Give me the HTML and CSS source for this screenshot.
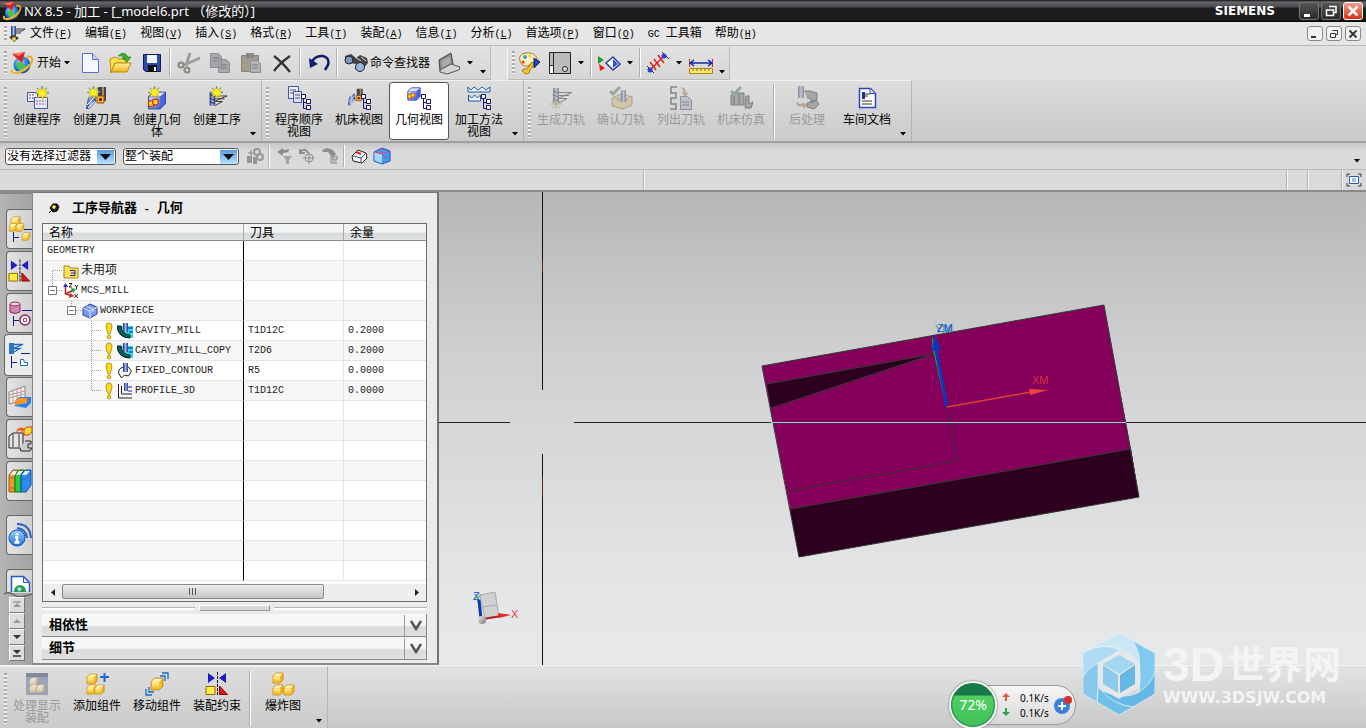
FILE: index.html
```html
<!DOCTYPE html>
<html lang="zh">
<head>
    <meta charset="UTF-8">
    <meta name="viewport" content="width=device-width, initial-scale=1.0">
    <title>NX 8.5 - 加工</title>
    <link rel="stylesheet" href="styles.css">
</head>
<body>
    <!-- shared icon parts -->
    <svg class="defs" width="0" height="0" aria-hidden="true">
        <defs>
            <linearGradient id="gBlue" x1="0" y1="0" x2="1" y2="1"><stop offset="0" stop-color="#c8d8ff"/><stop offset="1" stop-color="#3c5ee0"/></linearGradient>
            <linearGradient id="gTool" x1="0" y1="0" x2="1" y2="0"><stop offset="0" stop-color="#20306c"/><stop offset=".5" stop-color="#9db4ee"/><stop offset="1" stop-color="#26357c"/></linearGradient>
            <linearGradient id="gGold" x1="0" y1="0" x2="0" y2="1"><stop offset="0" stop-color="#fff3a0"/><stop offset="1" stop-color="#efb01c"/></linearGradient>
            <linearGradient id="gMetal" x1="0" y1="0" x2="1" y2="1"><stop offset="0" stop-color="#eee"/><stop offset="1" stop-color="#777"/></linearGradient>
            <linearGradient id="gSky" x1="0" y1="0" x2="0" y2="1"><stop offset="0" stop-color="#9fd4ff"/><stop offset="1" stop-color="#1f6fe0"/></linearGradient>
            <linearGradient id="gDrop" x1="0" y1="0" x2="0" y2="1"><stop offset="0" stop-color="#5a9ae0"/><stop offset="1" stop-color="#b8e4ff"/></linearGradient>
            <radialGradient id="gGlobe" cx=".4" cy=".35" r=".7"><stop offset="0" stop-color="#9fe0ff"/><stop offset=".6" stop-color="#1c7ad6"/><stop offset="1" stop-color="#0c3f8c"/></radialGradient>
        </defs>
        <symbol id="nx" viewBox="0 0 24 24">
            <circle cx="12" cy="14" r="8.5" fill="url(#gGlobe)"/>
            <path d="M7 12q3-2 5 0t4 3q-2 4-5 5-5-2-4-8z" fill="#4fc04a"/>
            <path d="M3 18q-3 4 3 4 9-1 14-8 4-6 1-8-2-1-4 0" fill="none" stroke="#f0a818" stroke-width="2"/>
            <path d="M3 18q-2 3 3 3 8-1 13-8" fill="none" stroke="#ffe98a" stroke-width=".8"/>
            <path d="M2 3l13-2-3 11z" fill="#e02020"/><path d="M2 3l13-2-6 4z" fill="#ff7a6a"/>
        </symbol>
        <symbol id="star" viewBox="0 0 14 14">
            <path d="M7 0l1.2 4L12 1.600 10 5.500l4 .5-3.800 2 2.300 4-4-2-1 4-1.500-4-4 2 2-4L0 7l4-1.500L2 2l3.600 2z" fill="#ffee20" stroke="#b89c10" stroke-width=".5"/>
            <path d="M7 0v3M0 7h2M12 7h2M2 2l1 1M12 2l-1 1" stroke="#2a9bb0"/>
        </symbol>
        <symbol id="tree" viewBox="0 0 10 16">
            <path d="M2.500 3v11.500H6M2.500 8.500H6" fill="none" stroke="#10107c"/>
            <path d="M.5.5h4v4h-4zM5.500 5.500h4v4h-4zM5.500 11.500h4v4h-4z" fill="#ffffc0" stroke="#10107c"/>
        </symbol>
        <symbol id="cube" viewBox="0 0 12 12">
            <path d="M1 4l3-3h7v7l-3 3H1z" fill="#f6b71c" stroke="#b87808" stroke-width=".7"/>
            <path d="M1.400 4L4 1.400h6.500L8 4z" fill="#fff4b0"/><path d="M1.400 4.400H8v6.300H1.400z" fill="url(#gGold)"/>
        </symbol>
        <symbol id="bluecube" viewBox="0 0 18 18">
            <path d="M1 5l5-4h11v11l-5 5H1z" fill="#4a64e0" stroke="#20309c" stroke-width=".8"/>
            <path d="M1.500 5L6 1.500h10.500L12 5z" fill="#d8e6ff"/><path d="M1.500 5.500H12v11H1.500z" fill="url(#gBlue)"/>
            <circle cx="3.500" cy="12" r="2.800" fill="#ffdf20" stroke="#e02010"/><circle cx="7.500" cy="10.500" r="2.800" fill="#ffdf20" stroke="#e02010"/>
        </symbol>
        <symbol id="bit" viewBox="0 0 24 24">
            <path d="M4 2h6v15H4z" fill="url(#gTool)"/><path d="M4 5l6 2M4 9l6 2M4 13l6 2" stroke="#0c1850" stroke-width=".8"/>
            <path d="M10 6.500h13L10 12M10 9.500h10M10 12.500h8L10 17" fill="none" stroke="#333"/>
        </symbol>
        <symbol id="constraint" viewBox="0 0 24 24">
            <path d="M3 1l7 5-7 5zM21 1l-7 5 7 5z" fill="#1c1cc8"/><path d="M12.500 0v24" stroke="#111" stroke-dasharray="3 1"/>
            <path d="M1 14.500h9v8H1z" fill="#ffee40" stroke="#8a6a00"/><path d="M14.500 14v8.500h8z" fill="#e01818" stroke="#800"/>
        </symbol>
        <symbol id="check" viewBox="0 0 12 10"><path d="M1 5l3 3 7-7" fill="none" stroke="#1c8c40" stroke-width="3"/></symbol>
        <symbol id="drill" viewBox="0 0 24 24">
            <path d="M13 1h8v14h-8z" fill="#444"/><path d="M17 1h2v14h-2z" fill="#b4885c"/><path d="M12 10h7v7h-7z" fill="#ffb830" stroke="#8c4a00"/><circle cx="15.500" cy="13.500" r="1.500" fill="#400"/>
            <path d="M3 12l7-5 1 8-6 8H1z" fill="url(#gTool)"/><path d="M2 19l8-8M3 22l7-7" stroke="#fff"/>
        </symbol>
        <symbol id="caret" viewBox="0 0 7 4"><path d="M0 0h6L3 3.500z" fill="#000"/></symbol>
        <symbol id="bang" viewBox="0 0 10 18">
            <path d="M2 4q0-3 3-3t3 3q0 3-2 8H4Q2 7 2 4z" fill="#ffd820" stroke="#a88400" stroke-width=".8"/><circle cx="5" cy="15" r="1.800" fill="#ffd820" stroke="#a88400" stroke-width=".8"/>
        </symbol>
        <symbol id="cavity" viewBox="0 0 16 16">
            <path d="M4 3h12v12h-4L5 10z" fill="#28d8e8"/><path d="M0 3h4q0 8 9 9v3Q1 15 0 3z" fill="#0c6058" stroke="#022"/>
            <path d="M6 0h5v9H6z" fill="url(#gTool)"/><path d="M11 5h5M12 9h4" stroke="#1020c0"/>
        </symbol>
    </svg>

    <header class="titlebar">
        <svg width="20" height="20"><use href="#nx"/></svg>
        <h1>NX 8.5 - 加工 - [_model6.prt （修改的）]</h1>
        <span class="brand">SIEMENS</span>
        <div class="window-buttons">
            <button aria-label="最小化"><svg width="12" height="12"><path d="M1 9h6v3H1z" fill="#fff"/></svg></button>
            <button aria-label="还原"><svg width="12" height="12"><path d="M4 1.500h7v6H9M1.500 5h7v5.500h-7z" fill="none" stroke="#fff" stroke-width="1.500"/></svg></button>
            <button class="close" aria-label="关闭"><svg width="12" height="12"><path d="M1.500 1.500l9 9m0-9l-9 9" stroke="#fff" stroke-width="2.500"/></svg></button>
        </div>
    </header>

    <nav class="menubar">
        <span class="grip"></span>
        <svg width="18" height="16"><path d="M3 0h5v10H3z" fill="url(#gTool)"/><path d="M8 3h9l-3 2H8M8 7h5" fill="none" stroke="#333"/><path d="M1 11l5-2 5 3-5 4z" fill="#4a3c10"/><circle cx="6" cy="13" r="2" fill="#e8d060"/></svg>
        <button>文件<span>(<u>F</u>)</span></button>
        <button>编辑<span>(<u>E</u>)</span></button>
        <button>视图<span>(<u>V</u>)</span></button>
        <button>插入<span>(<u>S</u>)</span></button>
        <button>格式<span>(<u>R</u>)</span></button>
        <button>工具<span>(<u>T</u>)</span></button>
        <button>装配<span>(<u>A</u>)</span></button>
        <button>信息<span>(<u>I</u>)</span></button>
        <button>分析<span>(<u>L</u>)</span></button>
        <button>首选项<span>(<u>P</u>)</span></button>
        <button>窗口<span>(<u>O</u>)</span></button>
        <button><span>GC </span>工具箱</button>
        <button>帮助<span>(<u>H</u>)</span></button>
        <div class="doc-buttons">
            <button aria-label="最小化文档"><svg width="10" height="10"><path d="M1 8h5" stroke="#333" stroke-width="2"/></svg></button>
            <button aria-label="还原文档"><svg width="10" height="10"><path d="M3.500 1.500h5v4H7M1.500 4.500h5v4h-5z" fill="none" stroke="#333"/></svg></button>
            <button aria-label="关闭文档"><svg width="10" height="10"><path d="M1.500 1.500l7 7m0-7l-7 7" stroke="#333" stroke-width="1.800"/></svg></button>
        </div>
    </nav>

    <div class="toolbar-row">
        <div class="toolbar">
            <span class="grip"></span>
            <button class="start"><svg width="24" height="24"><use href="#nx"/></svg>开始<svg width="7" height="4"><use href="#caret"/></svg></button>
            <button class="tool" aria-label="新建"><svg width="24" height="24"><path d="M4.500 2.500h10l6 6v13h-16z" fill="#f4f8ff" stroke="#5c6cd0"/><path d="M14.500 2.500v6h6" fill="#c4d0ff" stroke="#5c6cd0"/></svg></button>
            <button class="tool" aria-label="打开"><svg width="24" height="24"><path d="M1 8l5-2 4 2h8v4H6L2 22z" fill="#ffe24a" stroke="#b88c10"/><path d="M6 12h16l-4 9H2z" fill="url(#gGold)" stroke="#b88c10"/><path d="M9 5q6-6 10 1h3l-4 5-5-4h3q-3-3-7-2z" fill="#3cb030" stroke="#207010" stroke-width=".6"/></svg></button>
            <button class="tool" aria-label="保存"><svg width="24" height="24"><path d="M3.500 3.500h17v17h-15l-2-2z" fill="#2c4ca8" stroke="#101c60"/><path d="M7 4h10v8H7z" fill="#eef4ff"/><path d="M8 14h9v7H8z" fill="#111"/><path d="M14 16h2v4h-2z" fill="#fff"/></svg></button>
            <span class="sep"></span>
            <button class="tool" aria-label="剪切"><svg width="24" height="24" fill="none" stroke="#88887c" stroke-width="2"><path d="M13 2l-4 13M23 7L7 14" stroke="#9c9c98" stroke-width="3"/><circle cx="4" cy="14" r="2.500"/><circle cx="10" cy="19" r="2.500"/></svg></button>
            <button class="tool" aria-label="复制"><svg width="24" height="24" fill="#a8a8ac" stroke="#8c8c94"><path d="M2.500 2.500h8l3 3v11h-11zM10.500 8.500h8l3 3v10h-11z"/><path d="M5 7h6M5 10h4M13 14h6M13 17h6" stroke="#777"/></svg></button>
            <button class="tool" aria-label="粘贴"><svg width="24" height="24"><path d="M2.500 4.500h17v16h-17z" fill="#a49c88" stroke="#888478"/><path d="M7 2h8v5H7z" fill="#888"/><path d="M11.500 9.500h7l3 3v9h-10z" fill="#b4b4b8" stroke="#8c8c94"/><path d="M13 14h6M13 17h6" stroke="#777"/></svg></button>
            <button class="tool" aria-label="删除"><svg width="24" height="24"><path d="M4 5q8 6 16 16M20 5Q10 12 4 20" fill="none" stroke="#333" stroke-width="2.300"/></svg></button>
            <span class="sep"></span>
            <button class="tool" aria-label="撤消"><svg width="24" height="24"><path d="M4 12q4-8 12-7 7 2 5 9l-3 5" fill="none" stroke="#101c6c" stroke-width="2.500"/><path d="M2 7l1 10 8-4z" fill="#101c6c"/></svg></button>
            <span class="sep"></span>
            <button class="finder"><svg width="26" height="24"><path d="M2 5l6-2 5 4 4-3 7 3 1 5-8 9-5-3 1-5-6-1-5-2z" fill="#444"/><circle cx="6" cy="9" r="4" fill="#789ac8" stroke="#222"/><circle cx="17" cy="16" r="4.500" fill="#9ab4e8" stroke="#222"/><path d="M12 6l6 4M18 6l5 4" stroke="#ddd"/></svg>命令查找器</button>
            <button class="tool" aria-label="显示"><svg width="26" height="24"><path d="M3 9l12-7 2 11-13 7z" fill="#888" stroke="#444"/><path d="M5 10l9-5 1 7-9 5z" fill="#aaa"/><path d="M4 19l11-6 9 3-1 3-12 4-7-2z" fill="#d4d4d4" stroke="#555"/></svg></button>
            <button class="drop" aria-label="更多显示"><svg width="7" height="4"><use href="#caret"/></svg></button>
            <button class="overflow" aria-label="工具条选项"><svg width="7" height="4"><use href="#caret"/></svg></button>
        </div>
        <div class="toolbar second">
            <span class="grip"></span>
            <button class="tool" aria-label="颜色"><svg width="26" height="24"><path d="M3 10Q1 3 9 2t11 5q1 5-5 5l-4 3q-6 1-8-5z" fill="#fff0bc" stroke="#b07820"/><circle cx="8" cy="6" r="2" fill="#28a8e0"/><circle cx="13" cy="5" r="1.500" fill="#e8d020"/><circle cx="6" cy="11" r="1.500" fill="#e04020"/><path d="M15 11l-5 7q-4-1-5 2l4 3q4 0 4-4l4-6z" fill="#ffc830" stroke="#a87410"/><path d="M17 7l6 4-6 6z" fill="#2448c0" stroke="#101c60"/></svg></button>
            <button class="tool" aria-label="窗口布局"><svg width="24" height="24"><path d="M1.500 1.500h21v21h-21z" fill="#bcbcbc" stroke="#222"/><path d="M5.500 2v20M2 14.500h4" stroke="#222"/><path d="M2 15h3v7H2z" fill="#fff"/><circle cx="17" cy="18" r="2.500" fill="#ddd" stroke="#222"/></svg></button>
            <button class="drop" aria-label="更多布局"><svg width="7" height="4"><use href="#caret"/></svg></button>
            <span class="sep"></span>
            <button class="tool" aria-label="定向视图"><svg width="24" height="24"><path d="M1 5l6 4-6 4z" fill="#20a030"/><path d="M2 13l6 4-5 3z" fill="#e02020"/><path d="M16 6l7 7-7 6-7-7z" fill="#fff" stroke="#2840a0" stroke-width="1.500"/><path d="M16 8l5 5-5 4z" fill="#2c58d0"/></svg></button>
            <button class="drop" aria-label="更多视图"><svg width="7" height="4"><use href="#caret"/></svg></button>
            <span class="sep"></span>
            <button class="tool" aria-label="测量"><svg width="24" height="24"><path d="M4 19L18 5M4 11l6 8M8 8l6 8M12 4l6 8" stroke="#e02020" stroke-width="1.500"/><path d="M16 1l7 7M1 15l7 7" stroke="#222"/><circle cx="18" cy="5" r="2.500" fill="#2040e0"/><circle cx="4" cy="19" r="2.500" fill="#2040e0"/></svg></button>
            <button class="drop" aria-label="更多测量"><svg width="7" height="4"><use href="#caret"/></svg></button>
            <button class="tool" aria-label="标尺"><svg width="24" height="24"><path d="M.5 8v8M23.500 8v8" stroke="#e02020"/><path d="M1 12h22M5 9l-4 3 4 3M19 9l4 3-4 3" fill="none" stroke="#1030a8" stroke-width="1.500"/><path d="M.5 17.500h23v5H.5z" fill="#ffe870" stroke="#a88410"/><path d="M4 18v2M8 18v2M12 18v2M16 18v2M20 18v2" stroke="#806010"/></svg></button>
            <button class="overflow" aria-label="工具条选项"><svg width="7" height="4"><use href="#caret"/></svg></button>
        </div>
    </div>

    <div class="ribbon">
        <div class="group">
            <span class="grip"></span>
            <button class="big"><svg width="24" height="24"><path d="M2.500 6.500h10v9h-10z" fill="#eef" stroke="#4454a4"/><path d="M9.500 11.500h13v11h-13z" fill="#eef" stroke="#4454a4"/><path d="M11 15h10M11 18h10M4 9h5M4 12h5" stroke="#667" stroke-dasharray="2 1"/><use href="#star" x="10" width="14" height="14"/></svg>创建程序</button>
            <button class="big"><svg width="24" height="24"><use href="#drill"/><use href="#star" x="2" width="13" height="13"/></svg>创建刀具</button>
            <button class="big"><svg width="24" height="24"><use href="#bluecube" x="2" y="5" width="20" height="19"/><use href="#star" x="3" width="13" height="13"/></svg>创建几何体</button>
            <button class="big"><svg width="24" height="24"><use href="#bit" y="4" width="24" height="22"/><use href="#star" x="5" width="13" height="13"/></svg>创建工序</button>
            <button class="overflow" aria-label="工具条选项"><svg width="7" height="4"><use href="#caret"/></svg></button>
        </div>
        <div class="group">
            <span class="grip"></span>
            <button class="big"><svg width="24" height="24"><path d="M1.500.5h10v12h-10z" fill="#eef" stroke="#4454a4"/><path d="M6.500 5.500h8v11h-8z" fill="#dde4ff" stroke="#4454a4"/><path d="M3 4h6M3 7h3M8 9h5M8 12h5" stroke="#556"/><use href="#tree" x="14" y="8" width="10" height="16"/></svg>程序顺序视图</button>
            <button class="big"><svg width="24" height="24"><use href="#drill" width="18" height="22"/><use href="#tree" x="14" y="8" width="10" height="16"/></svg>机床视图</button>
            <button class="big active"><svg width="24" height="24"><use href="#bluecube" y="1" width="14" height="14"/><use href="#tree" x="14" y="8" width="10" height="16"/></svg>几何视图</button>
            <button class="big"><svg width="24" height="24"><path d="M1 1v5h22V1l-4 3-4-3-4 3-4-3-3 3z" fill="#e8f4ff" stroke="#205c98"/><path d="M1.500 9v6h12V9l-3 3-3-3-3 3z" fill="#e8f4ff" stroke="#205c98"/><use href="#tree" x="14" y="8" width="10" height="16"/></svg>加工方法视图</button>
            <button class="overflow" aria-label="工具条选项"><svg width="7" height="4"><use href="#caret"/></svg></button>
        </div>
        <div class="group">
            <span class="grip"></span>
            <button class="big" disabled><svg width="24" height="24"><use href="#bit"/><path d="M1 18h12M3 15l8 7M11 15l-8 7M7 14v9" stroke="#a08820"/></svg>生成刀轨</button>
            <button class="big" disabled><svg width="24" height="24"><path d="M3 12l9-4 11 3v8l-9 4-11-3z" fill="#e8b828" stroke="#966010"/><path d="M5 13l8 3 8-3-3-1H8z" fill="#50a0b0"/><path d="M12 4h5v12h-5z" fill="url(#gTool)"/><use href="#check" width="12" height="10"/></svg>确认刀轨</button>
            <button class="big" disabled><svg width="24" height="24"><path d="M8 1H2v6h5v5H2v6h5v5H1" fill="none" stroke="#333" stroke-width="1.500"/><path d="M11.500 10.500h7l4 4v9h-11z" fill="#9cadd8" stroke="#344880"/><path d="M13 16h7M13 19h7" stroke="#333"/><path d="M12 1q5 1 5 6l3-1-4 5-3-5h2" fill="#e06020"/></svg>列出刀轨</button>
            <button class="big" disabled><svg width="24" height="24"><path d="M2 9l4-2h9v12H2zM17 10h3v8l4-2-2 6h-6z" fill="#777" stroke="#222"/><path d="M5 10v8M10 8v10" stroke="#222"/><use href="#check" x="1" width="12" height="10"/></svg>机床仿真</button>
            <span class="sep"></span>
            <button class="big" disabled><svg width="24" height="24"><path d="M3 0h6v12H3z" fill="url(#gTool)"/><path d="M9 5h6l7 2v6l-5 4-2-5h-3M12 17l9-3 3 4-5 5-7-2z" fill="#777" stroke="#222"/><path d="M1 17q2 5 7 3v3l4-4-5-3v2q-3 1-4-2z" fill="#e06020"/></svg>后处理</button>
            <button class="big"><svg width="24" height="24"><path d="M4.500 2.500h11l5 5v14h-16z" fill="#fff" stroke="#2c44c8" stroke-width="1.500"/><path d="M15 2.500v5h5" fill="#dde4ff" stroke="#2c44c8"/><path d="M7 6h3v7H7z" fill="#202c90"/><path d="M10 8h5M10 10h3M7 15h10M7 18h10" stroke="#333"/></svg>车间文档</button>
            <button class="overflow" aria-label="工具条选项"><svg width="7" height="4"><use href="#caret"/></svg></button>
        </div>
    </div>

    <div class="selection-bar">
        <label class="combo filter">
            <select aria-label="类型过滤器"><option>没有选择过滤器</option></select>
            <svg width="17" height="14"><path d="M0 0h17v14H0z" fill="url(#gDrop)"/><path d="M3 4h11l-5.500 6z" fill="#111"/></svg>
        </label>
        <label class="combo scope">
            <select aria-label="选择范围"><option>整个装配</option></select>
            <svg width="17" height="14"><path d="M0 0h17v14H0z" fill="url(#gDrop)"/><path d="M3 4h11l-5.500 6z" fill="#111"/></svg>
        </label>
        <button class="small" aria-label="装配选择" disabled><svg width="18" height="18"><path d="M1 9h5v7H1zM7 10h4v7H7z" fill="#555"/><path d="M5 3v6M2 6h6" stroke="#333"/><circle cx="11" cy="5" r="3" fill="none" stroke="#665840" stroke-width="2"/><circle cx="14" cy="10" r="3" fill="none" stroke="#665840" stroke-width="2"/></svg></button>
        <span class="sep"></span>
        <button class="small" aria-label="重置过滤器" disabled><svg width="18" height="18"><path d="M14 2q1 4-6 4v3L2 5l6-4v2q4 0 6-1z" fill="#344"/><path d="M8 9h9l-3 4v4h-3v-4z" fill="#865"/></svg></button>
        <button class="small" aria-label="捕捉点" disabled><svg width="18" height="18" fill="none" stroke="#444"><path d="M2 2v4h5M2 5q5-5 8 1" stroke-width="2"/><circle cx="11" cy="11" r="4"/><path d="M11 5v12M5 11h12"/></svg></button>
        <button class="small" aria-label="查找" disabled><svg width="18" height="18"><path d="M1 3l5-2 6 2 3 4-4 3-4-5H2z" fill="#444"/><path d="M10 8v8h6M12 9h4v4h-4z" fill="#aa8" stroke="#444"/></svg></button>
        <span class="sep"></span>
        <button class="small" aria-label="小平面"><svg width="18" height="18"><path d="M2 9l6-6 8 3 1 5-5 5-9-2z" fill="#f4f4f4" stroke="#222"/><path d="M3 9l8 2 5-5M11 11v5" fill="none" stroke="#3454a8"/><path d="M6 5l5 2" stroke="#e02020" stroke-width="2"/></svg></button>
        <button class="small" aria-label="着色"><svg width="18" height="18"><path d="M1 5l8-4 8 3v10l-8 3-8-3z" fill="#3c9cf8" stroke="#2848c0"/><path d="M1.500 5L9 7v9.500l-7.500-3z" fill="#a4d8ff"/><path d="M1.500 5L9 7l7.500-3M9 1v6l5 5" fill="none" stroke="#e84060"/></svg></button>
        <button class="overflow" aria-label="工具条选项"><svg width="7" height="4"><use href="#caret"/></svg></button>
    </div>

    <div class="status-bar">
        <span class="cue"></span>
        <span class="status"></span>
        <span class="cell"></span>
        <span class="cell wide"></span>
        <button aria-label="全屏"><svg width="16" height="14"><path d="M3.500 3.500h9v7h-9z" fill="#fff" stroke="#2858b8"/><path d="M1 4V1h3M12 1h3v3M15 10v3h-3M4 13H1v-3" fill="none" stroke="#333"/><path d="M6 6h4M6 8h4" stroke="#4878c8"/></svg></button>
    </div>

    <main class="workspace">
        <aside class="resource-bar">
            <button class="tab" aria-label="装配导航器"><svg width="24" height="26"><use href="#cube" x="2" width="11" height="11"/><use href="#cube" y="7" width="10" height="9"/><use href="#cube" x="7" y="7" width="10" height="9"/><use href="#cube" x="13" y="16" width="10" height="9"/><path d="M5.500 16v10M6 21.500h5M16 13.500h8" stroke="#101c80"/></svg></button>
            <button class="tab" aria-label="约束导航器"><svg width="24" height="26"><use href="#constraint" width="23" height="26"/></svg></button>
            <button class="tab" aria-label="部件导航器"><svg width="24" height="26"><path d="M2 4v8q5 3 10 0V4z" fill="#d088b0" stroke="#8c2860"/><ellipse cx="7" cy="4" rx="5" ry="2" fill="#ffd0e8" stroke="#8c2860"/><path d="M5.500 16v10M6 20.500h5M14 10.500h10" stroke="#101c80"/><circle cx="17" cy="20" r="5" fill="#fff" stroke="#8c2860" stroke-width="1.500"/><circle cx="17" cy="20" r="1.800" fill="none" stroke="#8c2860"/></svg></button>
            <button class="tab current" aria-label="工序导航器"><svg width="24" height="26"><path d="M3 1h5v11H3z" fill="#2c78c8"/><path d="M8 2.500h9L8 6M8 6.500h6L8 10" fill="none" stroke="#2068c0" stroke-width="1.300"/><path d="M5.500 14v12M6 20.500h5M15 11.500h9" stroke="#101c80"/><path d="M14.500 17.500h3l1 3h3v3h-7z" fill="#fff" stroke="#2068c0"/></svg></button>
            <button class="tab" aria-label="机床导航器"><svg width="24" height="26"><path d="M1 8l16-6v14L1 20z" fill="#eee" stroke="#888"/><path d="M1 11l16-4M1 14l16-4M5 7v12M9 5v13M13 4v13" stroke="#c89898"/><path d="M7 17l4-4h12v6l-5 5-11-2z" fill="#2880f0"/><path d="M7 17l4-3h8v5l-12 2z" fill="#ff9420"/></svg></button>
            <button class="tab" aria-label="加工特征"><svg width="24" height="26"><path d="M1 10l4-3h10v15H1z" fill="#e4e4e4" stroke="#222"/><path d="M5 8v13M11 8v13" stroke="#333"/><path d="M17 15h6v3h-3v4h4l-2 3h-9l-1-3" fill="#ccc" stroke="#222"/><path d="M8 7q1-6 6-5l-1-1 4 2-4 3v-2q-3 0-5 3z" fill="#f05810"/><path d="M16 3l3-2h5v5l-3 3h-5z" fill="#ffdc30" stroke="#e03010"/></svg></button>
            <button class="tab" aria-label="重用库"><svg width="24" height="26"><path d="M1 7l4-5h5L7 7v17H1z" fill="#f09828" stroke="#a05008"/><path d="M7 7l4-5h5l-3 5v17H7z" fill="#28d040" stroke="#0c7c18"/><path d="M13 7l4-5h6v15l-5 7h-5z" fill="#2c8cf0" stroke="#104ca0"/><path d="M2 7l3-4h4L7 7zM8 7l3-4h4l-3 4zM14 7l3-4h5l-4 4z" fill="#f4f4f4"/><path d="M2 10h4M2 20h4M14 11h4l5-5M14 20h4" fill="none" stroke="#104ca0" stroke-opacity=".5"/></svg></button>
            <button class="tab gap" aria-label="HD3D 工具"><svg width="24" height="26"><circle cx="9" cy="16" r="8" fill="url(#gSky)" stroke="#1450b0"/><path d="M9 11v2M7 15h2v5M6.500 20.500h5" stroke="#fff" stroke-width="2.500" fill="none"/><path d="M9 2q13 0 14 14M9 6q9 1 10 10" fill="none" stroke="#2c60c0" stroke-width="2"/></svg></button>
            <button class="tab gap cut" aria-label="浏览器"><svg width="24" height="20"><path d="M3.500 4.500h12l6 6v10h-18z" fill="#fff" stroke="#2458d8" stroke-width="1.500"/><path d="M15.500 4.500v6h6" fill="none" stroke="#2458d8"/><circle cx="12" cy="19" r="6" fill="#2a9c48"/><path d="M9 16q3-2 5 1l-3 3z" fill="#a4dcff"/></svg></button>
            <svg class="wave" width="28" height="5"><path d="M0 2q5-3 10 1t18-1" fill="none" stroke="#666" stroke-width="1.500"/></svg>
            <div class="tab-scroll">
                <button aria-label="最前" disabled><svg width="10" height="8"><path d="M1 1h8" stroke="#999" stroke-width="1.500"/><path d="M5 2l4 4H1z" fill="#999"/></svg></button>
                <button aria-label="向上" disabled><svg width="10" height="8"><path d="M5 2l4 4H1z" fill="#999"/></svg></button>
                <button aria-label="向下"><svg width="10" height="8"><path d="M5 6L1 2h8z" fill="#333"/></svg></button>
                <button aria-label="最后"><svg width="10" height="8"><path d="M1 7h8" stroke="#333" stroke-width="1.500"/><path d="M5 5L1 1h8z" fill="#333"/></svg></button>
            </div>
        </aside>

        <section class="navigator">
            <h2><svg width="12" height="12"><path d="M2 6l3-4h4l2 3-2 4-4 1z" fill="#221c10" stroke="#000"/><path d="M5 3l3 1-1 3-3-1z" fill="#fff060"/><path d="M1 11l3-3" stroke="#000"/></svg><span>工序导航器<span class="dash"> - </span>几何</span></h2>
            <div class="tree-box">
                <table class="tree">
                    <thead>
                        <tr><th class="col-name">名称</th><th class="col-tool">刀具</th><th>余量</th></tr>
                    </thead>
                    <tbody>
                        <tr><td><div class="node root">GEOMETRY</div></td><td></td><td></td></tr>
                        <tr><td><div class="node"><svg width="20" height="20"><path d="M19 9.500H9.500V20" class="dots"/></svg><svg width="16" height="16"><path d="M1 3h5l1 2h8v10H1z" fill="#ffe060" stroke="#a88418"/><path d="M7 7.500h5v5H7M8 10h4" fill="none" stroke="#1c2ca0"/></svg><span class="cjk">未用项</span></div></td><td></td><td></td></tr>
                        <tr><td><div class="node"><svg width="20" height="20"><path d="M9.500 0v5M14 9.500h6" class="dots"/><path d="M5.500 5.500h8v8h-8zM7 9.500h5" class="box"/></svg><svg width="16" height="16"><path d="M2.500 11V2M2.500 11l8-4M2.500 11l8 2" stroke="#c02020" stroke-width="1.500"/><path d="M0 4l2.500-4L5 4z" fill="#1830d0"/><path d="M8 5l5 1-3 4z" fill="#20a030"/><path d="M7 10l4 3-5 2z" fill="#e02020"/><path d="M6 .5h3L6 4h3M12 2l1.500 2L15 2M13.500 4v2.500M11.500 11l3.500 4M15 11l-3.500 4" fill="none" stroke="#222"/></svg><span>MCS_MILL</span></div></td><td></td><td></td></tr>
                        <tr><td><div class="node"><svg width="39" height="20"><path d="M28.500 0v5M33 9.500h6" class="dots"/><path d="M24.500 5.500h8v8h-8zM26 9.500h5" class="box"/></svg><svg width="16" height="16"><path d="M1 5l7-4 7 3v7l-7 4-7-3z" fill="#7c98f0" stroke="#2840a0"/><path d="M1 5l7 3v7M8 8l7-4M4 3l7 3v3" fill="none" stroke="#dce6ff"/></svg><span>WORKPIECE</span></div></td><td></td><td></td></tr>
                        <tr><td><div class="node"><svg width="61" height="20"><path d="M48.500 0v20M49 9.500h9" class="dots"/></svg><svg width="10" height="18"><use href="#bang"/></svg><svg class="op" width="16" height="16"><use href="#cavity"/></svg><span>CAVITY_MILL</span></div></td><td>T1D12C</td><td>0.2000</td></tr>
                        <tr><td><div class="node"><svg width="61" height="20"><path d="M48.500 0v20M49 9.500h9" class="dots"/></svg><svg width="10" height="18"><use href="#bang"/></svg><svg class="op" width="16" height="16"><use href="#cavity"/></svg><span>CAVITY_MILL_COPY</span></div></td><td>T2D6</td><td>0.2000</td></tr>
                        <tr><td><div class="node"><svg width="61" height="20"><path d="M48.500 0v20M49 9.500h9" class="dots"/></svg><svg width="10" height="18"><use href="#bang"/></svg><svg class="op" width="16" height="16"><path d="M1.500 10q0-5 5-6h5l3 4-3 5-4-1-3 3z" fill="#f4f4f4" stroke="#222"/><path d="M6 0h5v9H6z" fill="url(#gTool)"/></svg><span>FIXED_CONTOUR</span></div></td><td>R5</td><td>0.0000</td></tr>
                        <tr><td><div class="node"><svg width="61" height="20"><path d="M48.500 0v10M49 9.500h9" class="dots"/></svg><svg width="10" height="18"><use href="#bang"/></svg><svg class="op" width="16" height="16"><path d="M1.500 1v14H15M4.500 3v8H15" fill="none" stroke="#222"/><path d="M7 0h4v8H7z" fill="url(#gTool)"/><path d="M11 4h4M11 8h4" stroke="#1020c0"/></svg><span>PROFILE_3D</span></div></td><td>T1D12C</td><td>0.0000</td></tr>
                        <tr><td></td><td></td><td></td></tr>
                        <tr><td></td><td></td><td></td></tr>
                        <tr><td></td><td></td><td></td></tr>
                        <tr><td></td><td></td><td></td></tr>
                        <tr><td></td><td></td><td></td></tr>
                        <tr><td></td><td></td><td></td></tr>
                        <tr><td></td><td></td><td></td></tr>
                        <tr><td></td><td></td><td></td></tr>
                        <tr><td></td><td></td><td></td></tr>
                    </tbody>
                </table>
                <div class="hscroll">
                    <button aria-label="向左滚动"><svg width="4" height="8"><path d="M4 0v7L0 3.500z" fill="#222"/></svg></button>
                    <div class="track"><div class="thumb"><svg width="8" height="7"><path d="M.5 0v7M3.500 0v7M6.500 0v7" stroke="#555"/></svg></div></div>
                    <button aria-label="向右滚动"><svg width="4" height="8"><path d="M0 0v7l4-3.500z" fill="#222"/></svg></button>
                </div>
            </div>
            <div class="splitter"><span></span></div>
            <button class="accordion">相依性<svg width="22" height="21"><path d="M6 6l5 8 5-8" fill="none" stroke="#555" stroke-width="2.500"/></svg></button>
            <button class="accordion">细节<svg width="22" height="21"><path d="M6 6l5 8 5-8" fill="none" stroke="#555" stroke-width="2.500"/></svg></button>
        </section>

        <section class="viewport">
            <svg width="100%" height="100%">
                <g shape-rendering="crispEdges">
                    <path d="M103.500 0v198M103.500 262v400" stroke="#111"/>
                    <path d="M103.500 68v12M103.500 285v20" stroke="#5c2818"/>
                    <path d="M0 230.500h71" stroke="#222"/>
                    <line x1="135" y1="230.500" x2="100%" y2="230.500" stroke="#222"/>
                </g>
                <path d="M323 174L665 113 692 257 700 305 360 365 351 317z" fill="#84005a"/>
                <path d="M351 317L692 257 700 305 360 365zM328 192L495 162 332 216z" fill="#2e001f"/>
                <path d="M323 174L665 113 700 305 360 365zM351 317L692 257M328 192L495 162 332 216" fill="none" stroke="#333c33"/>
                <path d="M508 215L518 269 349 299" fill="none" stroke="#333c33" stroke-dasharray="7 1"/>
                <path d="M332 230.500h355" stroke="#7ce0c4" shape-rendering="crispEdges"/>
                <path d="M508 215L495 158" stroke="#2c9c38" stroke-width="2"/><path d="M493 144v14l5 2z" fill="#2c9c38"/>
                <path d="M508 215L497 158" stroke="#0838c0" stroke-width="3"/><path d="M495 142l-2 17 9-1z" fill="#0838c0"/>
                <path d="M508 215L592 200" stroke="#e04030" stroke-width="1.500"/><path d="M590 197l19 1-18 5z" fill="#f04438"/>
                <g class="axis-label">
                    <text x="496" y="141" fill="#3c9c50">YM</text>
                    <text x="498" y="140" fill="#1450f0">ZM</text>
                    <text x="593" y="192" fill="#d83040">XM</text>
                    <text x="35" y="410" fill="#30a050">Y</text>
                    <text x="34" y="408" fill="#1450f0">Z</text>
                    <text x="72" y="426" fill="#e04040">X</text>
                </g>
                <path d="M41 403L56 400 60 425 46 427zM43 415l15-2" fill="#d0d2d2" stroke="#aaa"/>
                <path d="M42 427L40 408" stroke="#0838b0" stroke-width="3"/><path d="M44 427l18-3" stroke="#b02020" stroke-width="2"/><path d="M59 421l13 2-12 3z" fill="#f02828"/>
                <circle cx="43" cy="428" r="4" fill="url(#gMetal)"/>
            </svg>
        </section>
    </main>

    <footer class="bottom-bar">
        <div class="group">
            <span class="grip"></span>
            <button class="big" disabled><svg width="24" height="24"><path d="M1 1h22v22H1z" fill="#5470b8"/><path d="M1 1h22v4H1z" fill="#203880"/><use href="#cube" x="4" y="5" width="9" height="9"/><use href="#cube" x="4" y="12" width="9" height="9"/><use href="#cube" x="11" y="12" width="9" height="9"/></svg>处理显示装配</button>
            <button class="big"><svg width="24" height="24"><use href="#cube" x="1" y="1" width="12" height="12"/><use href="#cube" x="1" y="12" width="11" height="11"/><use href="#cube" x="9" y="12" width="11" height="11"/><path d="M15 5h9M19.500 1v9" stroke="#1868e0" stroke-width="2"/></svg>添加组件</button>
            <button class="big"><svg width="24" height="24"><use href="#cube" x="5" y="5" width="14" height="14"/><path d="M17 1h6v6M15 4h5v5M1 17v6h6M4 15v5h5" fill="none" stroke="#1868c0" stroke-width="1.300"/></svg>移动组件</button>
            <button class="big"><svg width="24" height="24"><use href="#constraint"/></svg>装配约束</button>
            <span class="sep"></span>
            <button class="big"><svg width="24" height="24"><use href="#cube" x="1" width="12" height="12"/><use href="#cube" x="1" y="12" width="12" height="12"/><use href="#cube" x="12" y="12" width="12" height="12"/></svg>爆炸图</button>
            <button class="overflow" aria-label="工具条选项"><svg width="7" height="4"><use href="#caret"/></svg></button>
        </div>
    </footer>

    <div class="watermark">
        <svg width="72" height="82" viewBox="0 0 72 82">
            <g stroke="#e2ecf2" stroke-width=".8">
                <path d="M50 8L72 20v18q-2 14-16 22 4-30-6-52z" fill="#80caef"/>
                <path d="M72 38v23L50 74Q30 72 15 56q30 14 45 0 10-8 12-18z" fill="#65b8e4"/>
                <path d="M50 74L36 82 14 69q1-9 1-15 15 18 35 20z" fill="#70bfe8"/>
                <path d="M14 69L0 61V44q6-12 15-16v26z" fill="#86c8ec"/>
                <path d="M0 44V20q20-12 40-2L15 30Q4 36 0 44z" fill="#b0dbf4"/>
                <path d="M0 20L36 0l14 8q8 14 6 22-16-18-36-17-12 1-20 7z" fill="#cbe6f5"/>
            </g>
            <path d="M36 17l21 13v24L36 66 15 54V30z" fill="#e5e8ea"/>
            <path d="M36 22l16 9-16 10-16-10z" fill="#a2d6f1"/><path d="M20 32l15 10v18l-15-9z" fill="#8ccaec"/><path d="M52 32L37 42v18l15-9z" fill="#65b8e4"/>
        </svg>
        <div>
            <p class="site-name"><span>3D</span>世界网</p>
            <p class="site-url">WWW.3DSJW.COM</p>
        </div>
    </div>

    <div class="speed">
        <span class="percent">72%</span>
        <div class="rates">
            <p><svg width="8" height="9"><path d="M4 0l4 4H5v4H3V4H0z" fill="#e85840"/></svg>0.1K/s</p>
            <p><svg width="8" height="9"><path d="M4 8L0 4h3V0h2v4h3z" fill="#28a050"/></svg>0.1K/s</p>
        </div>
        <button aria-label="加速"><svg width="20" height="20"><circle cx="9" cy="11" r="8" fill="#3c80e0"/><path d="M9 7v8M5 11h8" stroke="#fff" stroke-width="2"/><circle cx="15" cy="5" r="4" fill="#d83030"/></svg></button>
    </div>
</body>
</html>
```

FILE: styles.css
```css
* {
    box-sizing: border-box;
}
body {
    display: flex;
    flex-direction: column;
    position: relative;
    min-height: 100vh;
    margin: 0;
    overflow: hidden;
    background-color: #dcdcdc;
    color: #000;
    font-family: "Liberation Sans", "Noto Sans CJK SC", sans-serif;
    font-size: 12px;
    line-height: 12px;
}
h1, h2, p {
    margin: 0;
}
svg {
    display: block;
    flex: none;
}
.defs {
    position: absolute;
}
button {
    margin: 0;
    padding: 0;
    border: none;
    background: none;
    color: inherit;
    font: inherit;
}

/* title bar */
.titlebar {
    display: flex;
    align-items: center;
    height: 22px;
    padding: 0 3px 0 2px;
    background: linear-gradient(#111 0, #66666a 2px, #4a4a4e 7px, #1c1c1c 8px, #1c1c1c 20px, #000 22px);
    color: #fff;
}
.titlebar h1 {
    flex: 1;
    margin-left: 2px;
    font-family: "Noto Sans", "Noto Sans CJK SC", sans-serif;
    font-size: 13px;
    font-weight: normal;
}
.brand {
    font-family: "DejaVu Sans", sans-serif;
    font-size: 12px;
    font-weight: bold;
}
.window-buttons {
    display: flex;
    gap: 2px;
    margin-left: 24px;
}
.window-buttons button {
    display: flex;
    align-items: center;
    justify-content: center;
    width: 20px;
    height: 18px;
    border: 1px solid #77777a;
    border-radius: 3px;
    background: linear-gradient(#555, #2a2a2a);
}
.window-buttons .close {
    border-color: #fff;
    background: linear-gradient(#f0a090, #d83010);
}

/* menu */
.menubar {
    display: flex;
    align-items: center;
    gap: 13px;
    height: 24px;
    padding: 0 5px 0 4px;
    border-bottom: 1px solid #b8b8b8;
    background-color: #e6e6e6;
}
.menubar > svg {
    margin: 0 -9px 0 -12px;
}
.menubar span {
    font-family: "Liberation Mono", monospace;
    font-size: 10px;
    white-space: pre;
}
.doc-buttons {
    display: flex;
    gap: 3px;
    margin-left: auto;
}
.doc-buttons button {
    display: flex;
    align-items: center;
    justify-content: center;
    width: 16px;
    height: 15px;
    border: 1px solid #888;
    border-radius: 3px;
    background-color: #f2f2f2;
}
.grip {
    flex: none;
    width: 3px;
    height: 15px;
    background: repeating-linear-gradient(#aaa 0, #aaa 2px, #f4f4f4 2px, #f4f4f4 4px);
}
.sep {
    flex: none;
    width: 2px;
    margin: 2px;
    border-left: 1px solid #b0b0b0;
    border-right: 1px solid #fff;
}

/* standard toolbars */
.toolbar-row {
    display: flex;
    gap: 16px;
    height: 34px;
    background-color: #e2e2e2;
}
.toolbar {
    display: flex;
    padding: 0 1px 0 4px;
    border: 1px solid #bababa;
    border-width: 0 1px 1px 0;
    background: linear-gradient(#e2e2e2, #d6d6d6);
}
.toolbar.second {
    border-left: 1px solid #f4f4f4;
}
.toolbar .grip {
    align-self: center;
    height: 23px;
}
.toolbar button {
    display: flex;
    align-items: center;
    justify-content: center;
}
.toolbar .start {
    gap: 3px;
    width: 67px;
}
.toolbar .tool {
    width: 31px;
}
.toolbar.second .tool {
    width: 30px;
}
.toolbar .finder {
    gap: 1px;
    width: 93px;
}
.toolbar .drop {
    width: 13px;
}
.overflow {
    align-self: flex-end;
    width: 12px;
}
.toolbar .overflow {
    height: 14px;
}

/* large icon toolbars */
.ribbon {
    display: flex;
    height: 63px;
    border-bottom: 2px solid #a0a0a0;
    background: linear-gradient(#dcdcdc, #cacaca);
}
.group {
    display: flex;
    padding: 1px 2px 0 4px;
    border: 1px solid #f0f0f0;
    border-right-color: #b4b4b4;
    border-width: 1px 1px 0 0;
    background: linear-gradient(#dedede, #cbcbcb);
}
.group .grip {
    height: 51px;
    margin-top: 5px;
}
.group .overflow {
    padding-bottom: 5px;
}
.group .overflow svg {
    margin: 0 auto;
}
.big {
    display: flex;
    flex-direction: column;
    align-items: center;
    gap: 4px;
    width: 60px;
    height: 58px;
    padding: 3px 4px 0;
    border: 1px solid transparent;
    border-radius: 3px;
    text-align: center;
}
.big.active {
    border-color: #555;
    background-color: #fff;
}
.big:disabled {
    color: #999;
}
.big:disabled svg, .small:disabled svg {
    opacity: 0.5;
    filter: grayscale(0.5);
}

/* selection bar */
.selection-bar {
    display: flex;
    align-items: center;
    height: 27px;
    padding: 0 0 0 5px;
    border-bottom: 1px solid #bbb;
    background: linear-gradient(#c6c6c6, #dadada 8px);
}
.combo {
    position: relative;
    height: 17px;
    margin-right: 7px;
}
.combo.filter {
    width: 111px;
}
.combo.scope {
    width: 116px;
    margin-right: 4px;
}
.combo select {
    display: block;
    width: 100%;
    height: 17px;
    padding: 0 18px 0 1px;
    border: 1px solid #555;
    border-radius: 3px;
    appearance: none;
    background-color: #fff;
    color: #000;
    font: inherit;
}
.combo svg {
    position: absolute;
    top: 2px;
    right: 2px;
    pointer-events: none;
}
.small {
    display: flex;
    justify-content: center;
    width: 23px;
}
.selection-bar .sep {
    height: 22px;
}
.selection-bar .overflow {
    margin-left: auto;
    padding-bottom: 6px;
}

/* cue and status line */
.status-bar {
    display: flex;
    height: 22px;
    border-bottom: 2px solid #8a8a8a;
    background-color: #dadada;
}
.status-bar span {
    border-right: 1px solid #b4b4b4;
    box-shadow: 1px 0 #f4f4f4;
}
.status-bar .cue, .status-bar .status {
    flex: 1;
}
.status-bar .cell {
    width: 21px;
}
.status-bar .wide {
    width: 34px;
}
.status-bar button {
    padding: 3px 4px;
}

/* work area */
.workspace {
    display: flex;
    flex: 1;
    min-height: 0;
}
.resource-bar {
    display: flex;
    flex-direction: column;
    align-items: flex-end;
    gap: 2px;
    width: 33px;
    padding-top: 15px;
    border-top: 2px solid #888;
    border-right: 1px solid #888;
    background: linear-gradient(90deg, #b4b4b4, #a4a4a4);
}
.tab {
    display: flex;
    align-items: center;
    width: 26px;
    height: 40px;
    padding-left: 1px;
    overflow: hidden;
    border: 1px solid #666;
    border-right: none;
    border-radius: 4px 0 0 4px;
    background: linear-gradient(90deg, #e4e4e4, #cfcfcf);
}
.tab.current {
    width: 28px;
    height: 42px;
    margin: -1px 0;
    background: #ececec;
}
.tab.gap {
    margin-top: 12px;
}
.tab.cut {
    height: 24px;
    border-bottom: none;
    border-radius: 4px 0 0 0;
}
.wave {
    margin: -3px 0 -2px;
}
.tab-scroll {
    display: flex;
    flex-direction: column;
    margin-right: 7px;
}
.tab-scroll button {
    display: flex;
    align-items: center;
    justify-content: center;
    width: 16px;
    height: 16px;
    border: 1px solid #fff;
    border-right-color: #777;
    border-bottom-color: #777;
    background-color: #ddd;
}

.navigator {
    display: flex;
    flex-direction: column;
    width: 406px;
    padding: 0 10px 3px 9px;
    border-top: 1px solid #777;
    border-right: 2px solid #70747a;
    border-bottom: 2px solid #888;
    background-color: #ebebeb;
}
.navigator h2 {
    display: flex;
    align-items: center;
    gap: 12px;
    height: 30px;
    padding-left: 6px;
    font-size: 13px;
    white-space: pre;
}
.dash {
    font-family: "Liberation Mono", monospace;
    font-size: 11px;
}
.tree-box {
    display: flex;
    flex-direction: column;
    height: 379px;
    border: 1px solid #6c6c6c;
    background-color: #fff;
}
.tree {
    width: 100%;
    border-collapse: separate;
    border-spacing: 0;
    table-layout: fixed;
    color: #222;
    font-family: "Liberation Mono", "Noto Sans CJK SC", monospace;
    font-size: 10px;
}
.tree th {
    height: 17px;
    padding: 0 6px;
    border-right: 1px solid #aaa;
    border-bottom: 1px solid #888;
    background: linear-gradient(#f2f3f3 50%, #d6d9da 60%, #e0e2e3);
    color: #000;
    font-family: "Noto Sans CJK SC", sans-serif;
    font-size: 12px;
    font-weight: normal;
    line-height: 12px;
    text-align: left;
}
.tree .col-name {
    width: 201px;
}
.tree .col-tool {
    width: 100px;
}
.tree td {
    height: 20px;
    padding: 0 4px;
    border-right: 1px solid #e4e4e4;
    border-bottom: 1px solid #e4e4e4;
}
.tree td:first-child {
    padding: 0;
    border-right-color: #000;
}
.tree tr :last-child {
    border-right: none;
}
.tree tbody tr:nth-child(even) {
    background-color: #f6f6f6;
}
.node {
    display: flex;
    align-items: center;
    height: 19px;
}
.node.root {
    padding-left: 4px;
}
.node span {
    margin-left: 2px;
}
.node .cjk {
    font-size: 12px;
}
.node .op {
    margin-left: 3px;
}
.dots {
    fill: none;
    stroke: #999;
    stroke-dasharray: 1 1;
}
.box {
    fill: #fff;
    stroke: #777;
}
.hscroll {
    display: flex;
    height: 17px;
    margin-top: auto;
    background-color: #eee;
}
.hscroll button {
    display: flex;
    align-items: center;
    justify-content: center;
    width: 19px;
}
.track {
    flex: 1;
}
.thumb {
    display: flex;
    align-items: center;
    justify-content: center;
    width: 76%;
    height: 15px;
    border: 1px solid #888;
    border-radius: 2px;
    background: linear-gradient(#eee, #c6c6c6);
}
.splitter {
    display: flex;
    align-items: center;
    gap: 4px;
    height: 12px;
}
.splitter::before, .splitter::after {
    content: "";
    flex: 1;
    height: 2px;
    border-top: 1px solid #b4b4b4;
    background-color: #fff;
}
.splitter span {
    width: 71px;
    height: 6px;
    border: 1px solid #fff;
    border-right-color: #999;
    border-bottom-color: #999;
    background-color: #d8d8d8;
}
.accordion {
    display: flex;
    align-items: center;
    justify-content: space-between;
    height: 23px;
    padding-left: 7px;
    border-right: 1px solid #888;
    border-bottom: 1px solid #888;
    background: linear-gradient(#f6f7f7 50%, #d8dadb 60%, #e0e1e2);
    font-size: 13px;
    font-weight: bold;
}
.accordion svg {
    border-left: 1px solid #999;
}
.viewport {
    flex: 1;
    min-width: 0;
    background: linear-gradient(#b6b7b9, #cfd0d1 35%, #e4e6e8 85%, #e6e8ea);
}
.axis-label {
    font-size: 11px;
}

/* assembly toolbar */
.bottom-bar {
    display: flex;
    height: 63px;
    border-top: 1px solid #f4f4f4;
    background: linear-gradient(#e2e3e4, #c8c8c8);
}

/* floating layers */
.watermark {
    display: flex;
    gap: 8px;
    position: absolute;
    right: 25px;
    bottom: 13px;
    color: #f3f4f5;
    pointer-events: none;
}
.site-name {
    display: flex;
    align-items: center;
    height: 36px;
    margin-top: 14px;
    font-size: 38px;
    font-weight: bold;
    line-height: 36px;
}
.site-name span {
    width: 64px;
    font-size: 48px;
}
.site-url {
    margin-top: 9px;
    font-family: "DejaVu Sans", sans-serif;
    font-size: 16px;
    font-weight: bold;
}
.speed {
    display: flex;
    align-items: center;
    position: absolute;
    right: 290px;
    bottom: 3px;
    width: 106px;
    height: 40px;
    border: 1px solid #999;
    border-radius: 20px;
    background: linear-gradient(#f6f6f6, #d8d8d8);
    font-family: "Noto Sans", sans-serif;
    font-size: 10px;
}
.percent {
    flex: none;
    width: 48px;
    height: 48px;
    margin: 0 5px 0 -22px;
    border: 2px solid #f2f2f2;
    border-radius: 50%;
    background: radial-gradient(circle, transparent 20px, #187848 22px), linear-gradient(#187848 12px, #50d060 13px, #40c058);
    box-shadow: 0 0 2px #444;
    color: #fff;
    font-size: 14px;
    line-height: 44px;
    text-align: center;
}
.rates {
    display: flex;
    flex-direction: column;
    gap: 3px;
}
.rates p {
    display: flex;
    align-items: center;
    gap: 10px;
}
.speed button {
    margin-left: 4px;
}
```
